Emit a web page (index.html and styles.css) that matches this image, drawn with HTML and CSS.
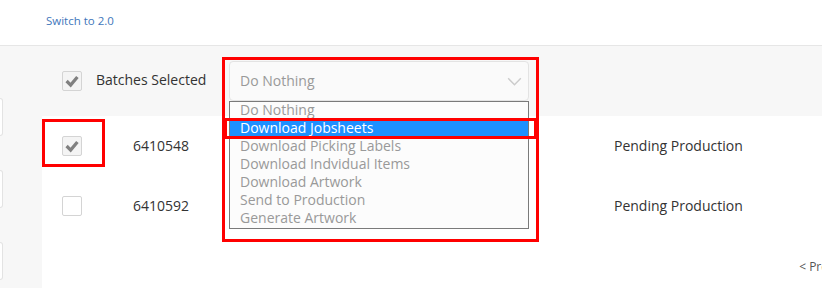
FILE: index.html
```html
<!doctype html>
<html>
<head>
    <title>Batches</title>
    <meta charset="utf-8">
    <link rel="stylesheet" href="styles.css">
</head>
<body>
    <div class="topbar">
        <a class="switch" href="#">Switch to 2.0</a>
    </div>
    <div class="main">
        <div class="side">
            <div class="side-box"></div>
            <div class="side-box"></div>
            <div class="side-box"></div>
        </div>
        <div class="content">
            <div class="bulk">
                <span class="check checked">
                    <svg viewBox="0 0 20 20"><path d="M4 10l4.5 4.5 7.5-9"/></svg>
                </span>
                <span class="bulk-label">Batches Selected</span>
                <div class="select-wrap">
                    <div class="select">
                        <span>Do Nothing</span>
                        <svg class="chev" viewBox="0 0 16 10"><path d="M1 1.5l7 7 7-7"/></svg>
                    </div>
                    <ul class="options">
                        <li>Do Nothing</li>
                        <li class="hl">Download Jobsheets</li>
                        <li>Download Picking Labels</li>
                        <li>Download Indvidual Items</li>
                        <li>Download Artwork</li>
                        <li>Send to Production</li>
                        <li>Generate Artwork</li>
                    </ul>
                    <div class="mark mark-big"></div>
                    <div class="mark mark-row"></div>
                </div>
            </div>
            <div class="rows">
                <div class="row">
                    <span class="check-cell">
                        <span class="check checked">
                            <svg viewBox="0 0 20 20"><path d="M4 10l4.5 4.5 7.5-9"/></svg>
                        </span>
                        <span class="mark mark-check"></span>
                    </span>
                    <span class="id">6410548</span>
                    <span class="status">Pending Production</span>
                </div>
                <div class="row">
                    <span class="check-cell">
                        <span class="check"></span>
                    </span>
                    <span class="id">6410592</span>
                    <span class="status">Pending Production</span>
                </div>
            </div>
            <div class="pager">&lt; Prev</div>
        </div>
    </div>
</body>
</html>
```

FILE: styles.css
```css
body {
    margin: 0;
    overflow: hidden;
    font-family: "Open Sans", sans-serif;
    color: #333;
    background: #f7f7f7;
}

.topbar {
    height: 45px;
    background: #fff;
    border-bottom: 1px solid #e6e6e6;
    display: flex;
    align-items: center;
    padding-left: 46px;
}

.switch {
    font-size: 11.5px;
    color: #3f77bb;
    text-decoration: none;
    margin-top: -4px;
}

.main {
    display: flex;
    height: 242px;
}

.side {
    width: 42px;
    display: flex;
    flex-direction: column;
    gap: 34px;
    padding-top: 52px;
}

.side-box {
    width: 2px;
    height: 36px;
    background: #fff;
    border: 1px solid #e3e3e3;
    border-left: none;
    border-radius: 0 4px 4px 0;
}

.content {
    flex: 1;
    background: #fff;
}

.bulk {
    height: 70px;
    background: #f7f7f7;
    display: flex;
    align-items: center;
    padding-left: 20px;
}

.check {
    display: inline-block;
    box-sizing: border-box;
    width: 20px;
    height: 20px;
    border: 1px solid #d4d4d4;
    border-radius: 2px;
    background: #fff;
}

.check.checked {
    background: #f4f4f4;
}

.check svg {
    display: block;
    width: 18px;
    height: 18px;
}

.check path {
    fill: none;
    stroke: #808080;
    stroke-width: 3.6;
}

.bulk-label {
    font-size: 14px;
    margin-left: 14px;
    margin-bottom: 3px;
    width: 133px;
}

.select-wrap {
    position: relative;
}

.select {
    box-sizing: border-box;
    width: 300px;
    height: 40px;
    border: 1px solid #e3e3e3;
    border-radius: 4px;
    background: #fafafa;
    display: flex;
    align-items: center;
    justify-content: space-between;
    padding: 0 6px 0 10px;
    font-size: 14px;
    color: #999;
}

.select span {
    margin-bottom: 2px;
}

.chev {
    width: 15px;
    height: 9px;
}

.chev path {
    fill: none;
    stroke: #ccc;
    stroke-width: 1.6;
}

.options {
    position: absolute;
    top: 40px;
    left: 0;
    box-sizing: border-box;
    width: 300px;
    margin: 0;
    padding: 0;
    list-style: none;
    background: #fcfcfc;
    border: 1px solid #7a7a7a;
}

.options li {
    height: 18px;
    line-height: 16px;
    padding-left: 10px;
    font-size: 14px;
    color: #999;
}

.options li.hl {
    background: #1e90ff;
    color: #fff;
}

.mark {
    position: absolute;
    border: 3px solid #f00;
}

.mark-big {
    left: -7px;
    top: -4px;
    width: 311px;
    height: 179px;
}

.mark-row {
    left: -5px;
    top: 57px;
    width: 307px;
    height: 15px;
}

.rows {
    padding-left: 20px;
}

.row {
    height: 60px;
    display: flex;
    align-items: center;
    font-size: 14px;
}

.row .id,
.row .status {
    margin-bottom: 2px;
}

.check-cell {
    position: relative;
    display: flex;
    width: 71px;
}

.mark-check {
    left: -20px;
    top: -17px;
    width: 57px;
    height: 42px;
}

.id {
    width: 481px;
}

.pager {
    text-align: right;
    font-size: 12px;
    color: #555;
    margin-top: 22px;
    margin-right: -12px;
}
```
